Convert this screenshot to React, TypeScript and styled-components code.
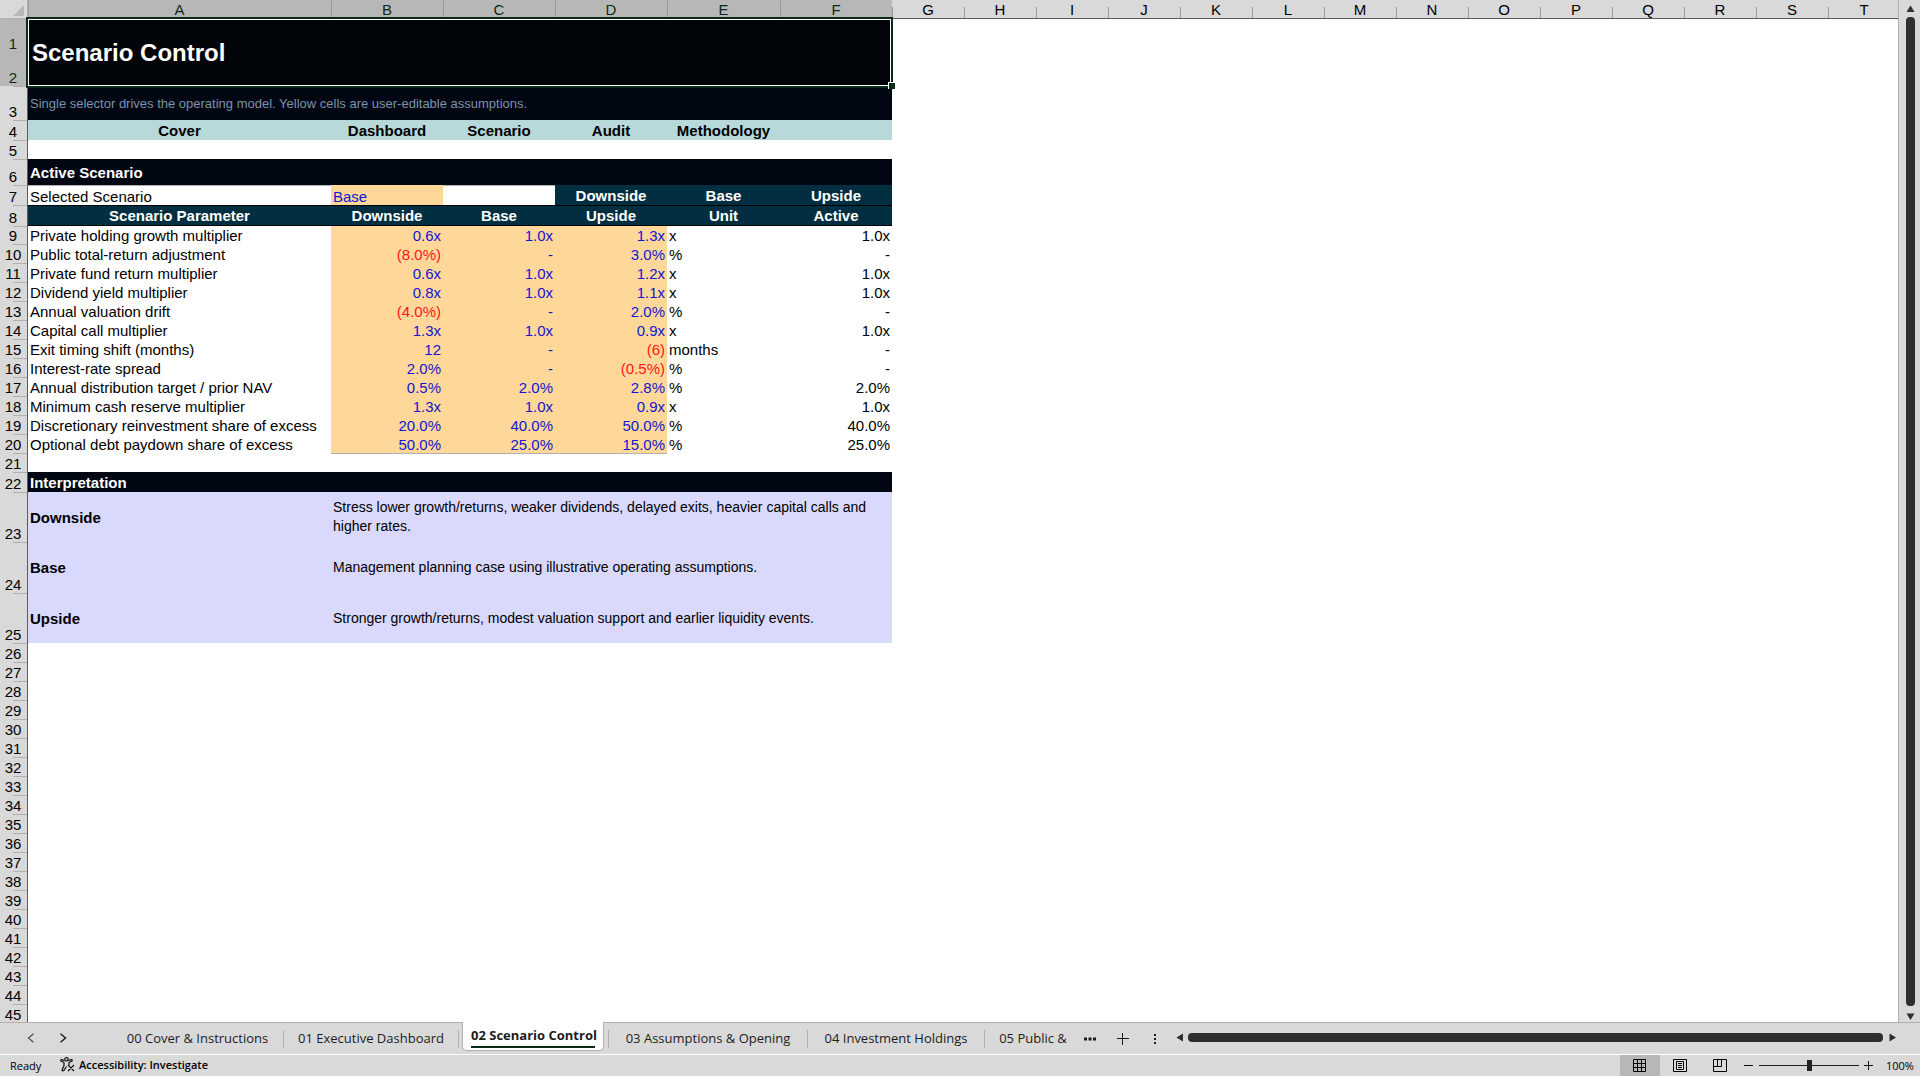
import React from "react";
import styled, { createGlobalStyle, css } from "styled-components";

const color = {
  chrome: "#d9d9d9",
  chromeActive: "#b7b7b7",
  rule: "#b0b0b0",
  edge: "#5c5c5c",
  green: "#0b2b17",
  navy: "#010613",
  petrol: "#012e40",
  teal: "#b7d9d9",
  input: "#ffd899",
  note: "#d9d9fe",
  blue: "#1414d2",
  red: "#ff1414",
  thumb: "#2e2e2e",
};

const GlobalStyle = createGlobalStyle`
  * { box-sizing: border-box; }
  body { margin: 0; background: ${color.chrome}; }
  button { border: 0; padding: 0; background: none; color: inherit; font: inherit; cursor: pointer; }
`;

const uiFont = `"Open Sans", "Noto Sans", sans-serif`;

const Workbook = styled.div`
  display: flex;
  flex-direction: column;
  height: 100vh;
  overflow: hidden;
  color: #000;
  font-family: "Liberation Sans", Arial, sans-serif;
`;

const SheetArea = styled.main`
  display: flex;
  flex: 1;
  min-height: 0;
`;

const SheetViewport = styled.div`
  flex: 1;
  min-width: 0;
  overflow: hidden;
  background: #fff;
  border-right: 1px solid ${color.rule};
`;

const Sheet = styled.table`
  table-layout: fixed;
  width: 0;
  border-collapse: separate;
  border-spacing: 0;
  font-size: 15px;
  line-height: 17px;
`;

const Column = styled.col<{ $width: number }>`
  width: ${(p) => p.$width}px;
`;

const ColumnHead = styled.th<{ $active?: boolean }>`
  height: 19px;
  padding: 1px 0 0;
  font-weight: 400;
  color: ${(p) => (p.$active ? color.green : "#000")};
  background: linear-gradient(#999, #999) left bottom / 1px ${(p) => (p.$active ? 17 : 11)}px no-repeat
    ${(p) => (p.$active ? color.chromeActive : color.chrome)};
  border-bottom: 1px solid ${color.edge};
`;

const Corner = styled.th`
  padding: 0 3px 2px 0;
  background: ${color.chrome};
  border-right: 1px solid ${color.rule};
  border-bottom: 1px solid ${color.rule};
  text-align: right;
  vertical-align: bottom;
  line-height: 0;
`;

const RowHead = styled.th<{ $active?: boolean; $height: number }>`
  height: ${(p) => p.$height}px;
  padding: 0 1px 0 0;
  vertical-align: bottom;
  font-weight: 400;
  text-align: center;
  color: ${(p) => (p.$active ? color.green : "#000")};
  background: linear-gradient(${color.rule}, ${color.rule}) right top / 14px 1px no-repeat
    ${(p) => (p.$active ? color.chromeActive : color.chrome)};
  border-right: 1px solid ${color.edge};
`;

type Tone = "input" | "band" | "header" | "nav" | "note" | "subtitle" | "plain";

const tones: Record<Tone, ReturnType<typeof css>> = {
  plain: css``,
  input: css`
    background: ${color.input};
    color: ${color.blue};
  `,
  band: css`
    background: ${color.navy};
    color: #fff;
    font-weight: 700;
    vertical-align: middle;
  `,
  header: css`
    background: ${color.petrol};
    color: #fff;
    font-weight: 700;
    vertical-align: middle;
  `,
  nav: css`
    background: ${color.teal};
    font-weight: 700;
    vertical-align: middle;
  `,
  note: css`
    background: ${color.note};
    font-size: 14px;
    line-height: 19px;
    vertical-align: middle;
  `,
  subtitle: css`
    background: ${color.navy};
    color: #7b93ac;
    font-size: 13px;
    vertical-align: middle;
  `,
};

const Cell = styled.td<{
  $tone?: Tone;
  $align?: "left" | "center" | "right";
  $negative?: boolean;
  $strong?: boolean;
  $outlined?: boolean;
  $ruleTop?: boolean;
  $ruleBottom?: boolean;
}>`
  padding: 0 2px;
  vertical-align: bottom;
  text-align: ${(p) => p.$align ?? "left"};
  ${(p) => tones[p.$tone ?? "plain"]}
  ${(p) => p.$negative && `color: ${color.red};`}
  ${(p) => p.$strong && "font-size: 15px; font-weight: 700;"}
  ${(p) => p.$outlined && "border: solid #000; border-width: 1px 0;"}
  ${(p) => p.$ruleTop && `box-shadow: inset 0 1px ${color.rule};`}
  ${(p) => p.$ruleBottom && `box-shadow: 0 1px ${color.rule};`}
`;

const TitleCell = styled.td`
  position: relative;
  padding: 0 4px;
  background: #010408;
  color: #fff;
  font-size: 24px;
  font-weight: 700;
  line-height: 28px;
`;

const Selection = styled.span`
  position: absolute;
  inset: -2px -1px -2px -2px;
  border: 2px solid ${color.green};
  box-shadow: inset 0 0 0 1px #fff;

  &::after {
    content: "";
    position: absolute;
    right: -4px;
    bottom: -3px;
    width: 6px;
    height: 6px;
    background: ${color.green};
    border: solid #fff;
    border-width: 1px 0 0 1px;
  }
`;

const NavLink = styled.a`
  color: inherit;
  text-decoration: none;
`;

const VerticalScroll = styled.div`
  display: flex;
  flex-direction: column;
  align-items: center;
  gap: 4px;
  width: 21px;
  padding: 5px 5px 1px 6px;
`;

const ArrowButton = styled.button`
  display: flex;
  align-items: center;
  justify-content: center;
  color: ${color.thumb};
`;

const VerticalThumb = styled.div`
  flex: 1;
  width: 9px;
  margin-bottom: 3px;
  border-radius: 4px;
  background: ${color.thumb};
`;

const TabBar = styled.nav`
  display: flex;
  height: 33px;
  border-top: 1px solid ${color.rule};
  border-bottom: 1px solid #fff;
  background: ${color.chrome};
  color: #1c1c1c;
  font-family: ${uiFont};
  font-size: 13px;
  line-height: 24px;
  white-space: nowrap;
`;

const TabArrows = styled.div`
  display: flex;
  align-items: center;
  gap: 22px;
  width: 112px;
  padding: 0 0 2px 26px;
`;

const IconButton = styled.button<{ $width: number }>`
  display: flex;
  align-items: center;
  justify-content: center;
  width: ${(p) => p.$width}px;
`;

const Tab = styled.button<{ $width: number }>`
  display: flex;
  align-items: center;
  justify-content: center;
  width: ${(p) => p.$width}px;
  padding-bottom: 2px;
  font-size: 13px;
`;

const TabDivider = styled.span`
  align-self: center;
  width: 1px;
  height: 18px;
  background: ${color.rule};
`;

const ActiveTab = styled.button`
  align-self: flex-start;
  width: 142px;
  height: 29px;
  margin: -1px 4px 0 3px;
  padding: 0 8px;
  border: solid ${color.rule};
  border-width: 0 1px 1px;
  border-radius: 0 0 5px 5px;
  background: #fff;
  font-weight: 700;
`;

const ActiveLabel = styled.span`
  display: block;
  height: 24px;
  border-bottom: 2px solid ${color.green};
  line-height: 22px;
`;

const HorizontalScroll = styled.div`
  display: flex;
  flex: 1;
  align-items: center;
  gap: 4px;
  padding: 0 23px 2px 12px;
`;

const HorizontalThumb = styled.div`
  flex: 1;
  height: 9px;
  margin-right: 2px;
  border-radius: 4px;
  background: ${color.thumb};
`;

const StatusBar = styled.footer`
  display: flex;
  align-items: center;
  height: 21px;
  background: ${color.chrome};
  font-family: ${uiFont};
  font-size: 11px;
  line-height: 20px;
`;

const Ready = styled.span`
  width: 60px;
  padding-left: 10px;
`;

const Accessibility = styled.button`
  display: flex;
  align-items: center;
  gap: 4px;
  padding-bottom: 2px;
  font-weight: 600;
`;

const ViewControls = styled.div`
  display: flex;
  align-items: center;
  height: 100%;
  margin-left: auto;
`;

const ViewButton = styled.button<{ $active?: boolean }>`
  display: flex;
  align-items: center;
  justify-content: center;
  width: 40px;
  height: 100%;
  background: ${(p) => (p.$active ? color.chromeActive : "transparent")};
`;

const ZoomSlider = styled.input`
  appearance: none;
  width: 100px;
  height: 12px;
  margin: 0 4px 0 2px;
  background: linear-gradient(#222, #222) center / 100% 1px no-repeat;

  &::-webkit-slider-thumb {
    appearance: none;
    width: 5px;
    height: 11px;
    background: #222;
  }
`;

const ZoomValue = styled.span`
  width: 47px;
  padding-left: 13px;
`;

const columns = [
  { name: "A", width: 303 },
  { name: "B", width: 112 },
  { name: "C", width: 112 },
  { name: "D", width: 112 },
  { name: "E", width: 113 },
  { name: "F", width: 112 },
  ..."GHIJKLMNOPQRST".split("").map((name) => ({ name, width: 72 })),
];

const parameters: string[][] = [
  ["Private holding growth multiplier", "0.6x", "1.0x", "1.3x", "x", "1.0x"],
  ["Public total-return adjustment", "(8.0%)", "-", "3.0%", "%", "-"],
  ["Private fund return multiplier", "0.6x", "1.0x", "1.2x", "x", "1.0x"],
  ["Dividend yield multiplier", "0.8x", "1.0x", "1.1x", "x", "1.0x"],
  ["Annual valuation drift", "(4.0%)", "-", "2.0%", "%", "-"],
  ["Capital call multiplier", "1.3x", "1.0x", "0.9x", "x", "1.0x"],
  ["Exit timing shift (months)", "12", "-", "(6)", "months", "-"],
  ["Interest-rate spread", "2.0%", "-", "(0.5%)", "%", "-"],
  ["Annual distribution target / prior NAV", "0.5%", "2.0%", "2.8%", "%", "2.0%"],
  ["Minimum cash reserve multiplier", "1.3x", "1.0x", "0.9x", "x", "1.0x"],
  ["Discretionary reinvestment share of excess", "20.0%", "40.0%", "50.0%", "%", "40.0%"],
  ["Optional debt paydown share of excess", "50.0%", "25.0%", "15.0%", "%", "25.0%"],
];

const notes = [
  {
    name: "Downside",
    height: 50,
    text: "Stress lower growth/returns, weaker dividends, delayed exits, heavier capital calls and higher rates.",
  },
  { name: "Base", height: 51, text: "Management planning case using illustrative operating assumptions." },
  {
    name: "Upside",
    height: 50,
    text: "Stronger growth/returns, modest valuation support and earlier liquidity events.",
  },
];

const emptyRows = Array.from({ length: 20 }, (_, i) => 26 + i);

function Row({
  n,
  height = 19,
  active,
  children,
}: {
  n: number;
  height?: number;
  active?: boolean;
  children?: React.ReactNode;
}) {
  return (
    <tr>
      <RowHead scope="row" $height={height} $active={active}>
        {n}
      </RowHead>
      {children}
    </tr>
  );
}

function Arrow({ direction }: { direction: "up" | "down" | "left" | "right" }) {
  const shapes = {
    up: "M4.5 0.5 8.5 7H.5z",
    down: "M.5 0.5h8l-4 6.500z",
    left: "M7 .5v8L.5 4.500z",
    right: "M.5 .5v8L7 4.500z",
  };
  const vertical = direction === "up" || direction === "down";
  return (
    <ArrowButton aria-label={`Scroll ${direction}`}>
      <svg width={vertical ? 9 : 8} height={vertical ? 8 : 9}>
        <path d={shapes[direction]} fill="currentColor" />
      </svg>
    </ArrowButton>
  );
}

function Grid() {
  return (
    <Sheet>
      <colgroup>
        <Column $width={28} />
        {columns.map((c) => (
          <Column key={c.name} $width={c.width} />
        ))}
      </colgroup>
      <thead>
        <tr>
          <Corner>
            <svg width="11" height="11">
              <path d="M11 0v11H0z" fill={color.chromeActive} />
            </svg>
          </Corner>
          {columns.map((c, i) => (
            <ColumnHead key={c.name} scope="col" $active={i < 6}>
              {c.name}
            </ColumnHead>
          ))}
        </tr>
      </thead>
      <tbody>
        <Row n={1} height={33} active>
          <TitleCell colSpan={6} rowSpan={2}>
            Scenario Control
            <Selection />
          </TitleCell>
        </Row>
        <Row n={2} height={34} active />
        <Row n={3} height={34}>
          <Cell colSpan={6} $tone="subtitle">
            Single selector drives the operating model. Yellow cells are user-editable assumptions.
          </Cell>
        </Row>
        <Row n={4} height={20}>
          {["Cover", "Dashboard", "Scenario", "Audit", "Methodology"].map((name) => (
            <Cell key={name} $tone="nav" $align="center">
              <NavLink href={`#${name}`}>{name}</NavLink>
            </Cell>
          ))}
          <Cell $tone="nav" />
        </Row>
        <Row n={5} />
        <Row n={6} height={26}>
          <Cell colSpan={6} $tone="band">
            Active Scenario
          </Cell>
        </Row>
        <Row n={7} height={20}>
          <Cell $ruleTop>Selected Scenario</Cell>
          <Cell $tone="input">Base</Cell>
          <Cell $ruleTop />
          {["Downside", "Base", "Upside"].map((name) => (
            <Cell key={name} $tone="header" $align="center">
              {name}
            </Cell>
          ))}
        </Row>
        <Row n={8} height={21}>
          {["Scenario Parameter", "Downside", "Base", "Upside", "Unit", "Active"].map((name) => (
            <Cell key={name} $tone="header" $align="center" $outlined>
              {name}
            </Cell>
          ))}
        </Row>
        {parameters.map(([label, down, base, up, unit, active], i) => (
          <Row key={label} n={9 + i} height={i === 0 ? 18 : 19}>
            <Cell>{label}</Cell>
            {[down, base, up].map((value, k) => (
              <Cell
                key={k}
                $tone="input"
                $align="right"
                $negative={value.startsWith("(")}
                $ruleBottom={i === parameters.length - 1}
              >
                {value}
              </Cell>
            ))}
            <Cell>{unit}</Cell>
            <Cell $align="right">{active}</Cell>
          </Row>
        ))}
        <Row n={21} />
        <Row n={22} height={20}>
          <Cell colSpan={6} $tone="band">
            Interpretation
          </Cell>
        </Row>
        {notes.map((note, i) => (
          <Row key={note.name} n={23 + i} height={note.height}>
            <Cell $tone="note" $strong>
              {note.name}
            </Cell>
            <Cell colSpan={5} $tone="note">
              {note.text}
            </Cell>
          </Row>
        ))}
        {emptyRows.map((n) => (
          <Row key={n} n={n} />
        ))}
      </tbody>
    </Sheet>
  );
}

function SheetTabs() {
  return (
    <TabBar aria-label="Sheets">
      <TabArrows>
        <IconButton $width={10} aria-label="Previous sheet">
          <svg width="8" height="10" fill="none" stroke="#555" strokeWidth="1.3">
            <path d="M6.500 .7 1.500 5l5 4.300" />
          </svg>
        </IconButton>
        <IconButton $width={10} aria-label="Next sheet">
          <svg width="8" height="10" fill="none" stroke="#222" strokeWidth="1.5">
            <path d="M1.500 .7l5 4.300-5 4.300" />
          </svg>
        </IconButton>
      </TabArrows>
      <Tab $width={171}>00 Cover &amp; Instructions</Tab>
      <TabDivider />
      <Tab $width={174}>01 Executive Dashboard</Tab>
      <TabDivider />
      <ActiveTab aria-current="page">
        <ActiveLabel>02 Scenario Control</ActiveLabel>
      </ActiveTab>
      <TabDivider />
      <Tab $width={198}>03 Assumptions &amp; Opening</Tab>
      <TabDivider />
      <Tab $width={176}>04 Investment Holdings</Tab>
      <TabDivider />
      <Tab $width={96}>05 Public &amp;</Tab>
      <IconButton $width={18} aria-label="More sheets">
        <svg width="12" height="4" fill="#1c1c1c">
          <path d="M0 .5h3v3H0zM4.500 .5h3v3h-3zM9 .5h3v3H9z" />
        </svg>
      </IconButton>
      <IconButton $width={47} aria-label="New sheet">
        <svg width="12" height="12" stroke="#1c1c1c">
          <path d="M0 5.500h12M5.500 0v12" />
        </svg>
      </IconButton>
      <IconButton $width={18} aria-label="Resize tab area">
        <svg width="3" height="10" fill="#1c1c1c">
          <path d="M0 0h2v2H0zM0 4h2v2H0zM0 8h2v2H0z" />
        </svg>
      </IconButton>
      <HorizontalScroll>
        <Arrow direction="left" />
        <HorizontalThumb />
        <Arrow direction="right" />
      </HorizontalScroll>
    </TabBar>
  );
}

function Status() {
  return (
    <StatusBar>
      <Ready>Ready</Ready>
      <Accessibility>
        <svg width="15" height="15" fill="none" stroke="#111" strokeWidth="1.2">
          <circle cx="6.500" cy="2.300" r="1.700" />
          <path d="M4.500 3.600 1.800 2.500Q.5 2.500 .8 3.800L4 5.500v3L2 13q.6 1.400 1.800 .6L6.500 9.500 M8.500 3.600l2.700-1.100q1.300 0 1 1.300L9 5.500V8M8 8l6 6M14 8l-6 6" />
        </svg>
        Accessibility: Investigate
      </Accessibility>
      <ViewControls>
        <ViewButton $active aria-label="Normal view">
          <svg width="14" height="14" fill="none" stroke="#000">
            <path d="M.5 .5h12v12H.5zM4.500 .5v12M8.500 .5v12M.5 4.500h12M.5 8.500h12" />
          </svg>
        </ViewButton>
        <ViewButton aria-label="Page layout view">
          <svg width="14" height="14" fill="none" stroke="#000">
            <path d="M.5 .5h13v12H.5zM3.500 2.500h7v8h-7zM5 4.500h4M5 6.500h4M5 8.500h4" />
          </svg>
        </ViewButton>
        <ViewButton aria-label="Page break preview">
          <svg width="14" height="14" fill="none" stroke="#000">
            <path d="M.5 .5h13v12H.5zM.5 7.500h8v-7M4.500 .5v7" />
          </svg>
        </ViewButton>
        <IconButton $width={17} aria-label="Zoom out">
          <svg width="9" height="9" stroke="#111">
            <path d="M0 4.500h9" />
          </svg>
        </IconButton>
        <ZoomSlider type="range" min="0" max="200" defaultValue="100" aria-label="Zoom" />
        <IconButton $width={10} aria-label="Zoom in">
          <svg width="9" height="9" stroke="#111">
            <path d="M0 4.500h9M4.500 0v9" />
          </svg>
        </IconButton>
        <ZoomValue>100%</ZoomValue>
      </ViewControls>
    </StatusBar>
  );
}

export default function App() {
  return (
    <Workbook>
      <GlobalStyle />
      <SheetArea>
        <SheetViewport>
          <Grid />
        </SheetViewport>
        <VerticalScroll>
          <Arrow direction="up" />
          <VerticalThumb />
          <Arrow direction="down" />
        </VerticalScroll>
      </SheetArea>
      <SheetTabs />
      <Status />
    </Workbook>
  );
}
